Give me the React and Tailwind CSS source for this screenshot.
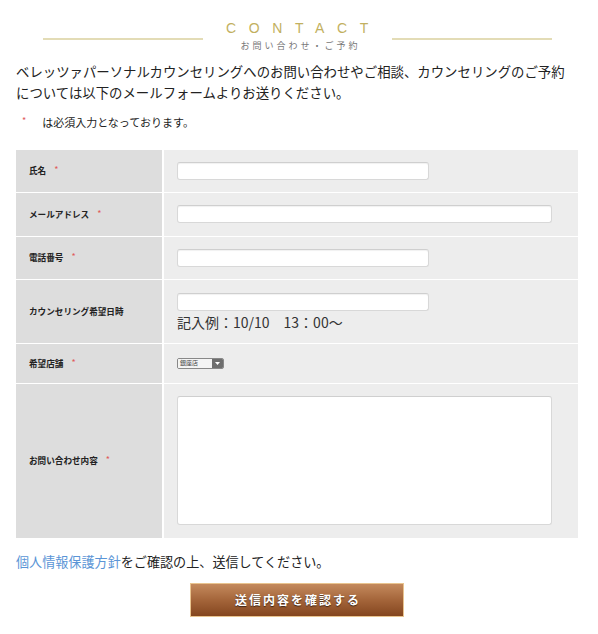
import React from "react";

const jp = { fontFamily: '"Noto Sans CJK JP", "Noto Sans", sans-serif' };

function Req() {
  return <span className="ml-[8px] text-[9px] leading-none text-[#e05a5a] relative -top-[1px]">*</span>;
}

function TextInput({ w }) {
  return (
    <div
      className={`h-[18px] ${w} rounded-[3px] border border-[#d8d8d8] border-t-[#cfcfcf] bg-white shadow-[inset_0_1px_1px_rgba(0,0,0,0.06)]`}
    />
  );
}

function Row({ h, label, req, children, valueClass = "" }) {
  return (
    <div className={`grid grid-cols-[146px_1fr] gap-[2px] ${h}`}>
      <div className="flex items-center bg-[#dddddd] pl-[13px]">
        <span className="text-[8.6px] font-bold text-[#222] leading-none">{label}</span>
        {req && <Req />}
      </div>
      <div className={`flex bg-[#ededed] pl-[13px] ${valueClass}`}>{children}</div>
    </div>
  );
}

export default function App() {
  return (
    <div className="w-[598px] h-[634px] bg-white text-[#222]" style={jp}>
      {/* Header */}
      <div className="pt-[21px] flex flex-col items-center">
        <div className="flex items-start w-full">
          <div className="ml-[43px] w-[160px] h-[1.5px] bg-[#e3dcb6] mt-[17px]" />
          <div className="flex-1 flex justify-center">
            <span
              className="text-[14px] leading-[14px] tracking-[12.6px] text-[#c2b060] pl-[12px]"
              style={{ fontFamily: '"Liberation Sans", Arial, sans-serif' }}
            >
              CONTACT
            </span>
          </div>
          <div className="mr-[46px] w-[160px] h-[1.5px] bg-[#e3dcb6] mt-[17px]" />
        </div>
        <div className="mt-[1px] text-[9px] leading-[10px] tracking-[3px] text-[#777] pl-[3px]">
          お問い合わせ・ご予約
        </div>
      </div>

      {/* Intro */}
      <div className="ml-[16px] mt-[10px] w-[566px] text-[13.4px] leading-[21px] whitespace-nowrap">
        ベレッツァパーソナルカウンセリングへのお問い合わせやご相談、カウンセリングのご予約
        <br />
        については以下のメールフォームよりお送りください。
      </div>

      <div className="ml-[22px] mt-[12px] flex items-center text-[11px] leading-[14px]">
        <span className="text-[9px] text-[#e05a5a] relative -top-[1px]">*</span>
        <span className="ml-[16px]">は必須入力となっております。</span>
      </div>

      {/* Table */}
      <div className="ml-[16px] mt-[21px] w-[562px] flex flex-col gap-px">
        <Row h="h-[42px]" label="氏名" req valueClass="items-center">
          <TextInput w="w-[252px]" />
        </Row>
        <Row h="h-[43px]" label="メールアドレス" req valueClass="items-center">
          <TextInput w="w-[375px]" />
        </Row>
        <Row h="h-[42px]" label="電話番号" req valueClass="items-center">
          <TextInput w="w-[252px]" />
        </Row>
        <Row h="h-[63px]" label="カウンセリング希望日時" valueClass="flex-col pt-[13px]">
          <TextInput w="w-[252px]" />
          <div className="mt-[2px] text-[14px] leading-[18px] text-[#333]">記入例：10/10　13：00～</div>
        </Row>
        <Row h="h-[39px]" label="希望店舗" req valueClass="items-center">
          <div className="flex h-[11px] w-[47px] rounded-[2px] border border-[#888] overflow-hidden">
            <div className="flex-1 bg-[#f4f4f4] flex items-center pl-[2px] text-[6px] leading-none text-[#444]">
              銀座店
            </div>
            <div className="w-[11px] bg-[#6e6e6e] flex items-center justify-center">
              <svg width="5" height="3" viewBox="0 0 5 3">
                <path d="M0 0h5L2.5 3z" fill="#fff" />
              </svg>
            </div>
          </div>
        </Row>
        <Row h="h-[154px]" label="お問い合わせ内容" req valueClass="items-center">
          <div className="h-[129px] w-[375px] rounded-[3px] border border-[#d8d8d8] border-t-[#cfcfcf] bg-white" />
        </Row>
      </div>

      {/* Footer */}
      <div className="ml-[16px] mt-[14px] text-[13.1px] leading-[20px] whitespace-nowrap">
        <span className="text-[#5a95d6]">個人情報保護方針</span>をご確認の上、送信してください。
      </div>

      <div className="flex justify-center mt-[11px] pr-[4px]">
        <button
          className="w-[214px] h-[34px] border border-[#e9c48f] bg-gradient-to-b from-[#c48a5d] via-[#a4653a] to-[#84461f] text-white text-[12px] font-bold tracking-[2px] pl-[2px] [text-shadow:0_1px_1px_rgba(0,0,0,0.6)]"
          style={jp}
        >
          送信内容を確認する
        </button>
      </div>
    </div>
  );
}
